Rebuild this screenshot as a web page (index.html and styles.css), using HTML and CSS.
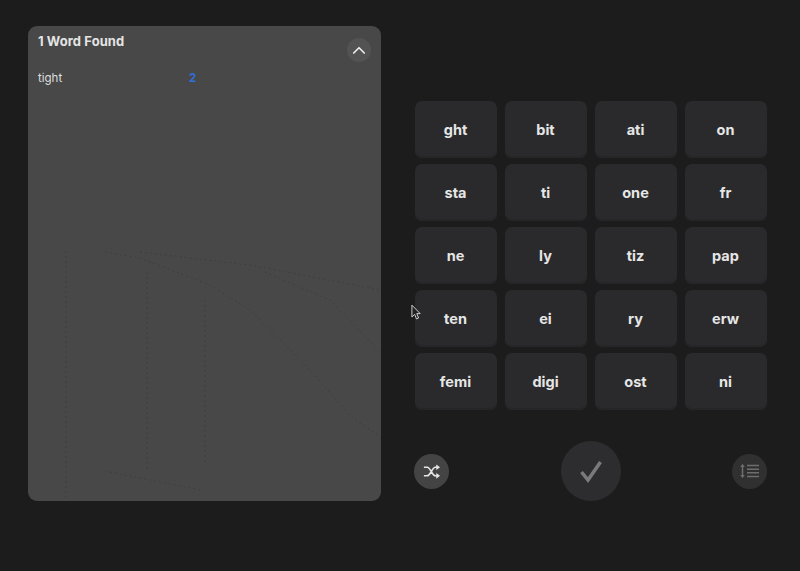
FILE: index.html
```html
<!DOCTYPE html>
<html lang="en">
<head>
  <meta charset="UTF-8" />
  <meta name="viewport" content="width=device-width, initial-scale=1.0" />
  <title>Word Tiles</title>
  <link rel="stylesheet" href="styles.css">
</head>
<body>
  <!-- Found words -->
  <section class="panel">
    <svg class="panel-marks" viewBox="0 0 353 475" aria-hidden="true">
      <path d="M38 225V475M119 246V445M177 274V440M77 226L112 232L182 259L222 284L272 334L327 394L353 411M237 246L302 274L353 327M112 226L222 239L353 264M77 445L172 464"/>
    </svg>
    <div class="panel-head">
      <h2 class="panel-title">1 Word Found</h2>
      <button class="collapse-btn" type="button" aria-label="Collapse">
        <svg viewBox="0 0 24 24"><path d="M5 16l7-7 7 7"/></svg>
      </button>
    </div>
    <ul class="word-list">
      <li class="word-row"><span class="word">tight</span><span class="word-score">2</span></li>
    </ul>
  </section>

  <!-- Board -->
  <main class="board">
    <div class="tiles">
      <button class="tile" type="button">ght</button>
      <button class="tile" type="button">bit</button>
      <button class="tile" type="button">ati</button>
      <button class="tile" type="button">on</button>
      <button class="tile" type="button">sta</button>
      <button class="tile" type="button">ti</button>
      <button class="tile" type="button">one</button>
      <button class="tile" type="button">fr</button>
      <button class="tile" type="button">ne</button>
      <button class="tile" type="button">ly</button>
      <button class="tile" type="button">tiz</button>
      <button class="tile" type="button">pap</button>
      <button class="tile" type="button">ten</button>
      <button class="tile" type="button">ei</button>
      <button class="tile" type="button">ry</button>
      <button class="tile" type="button">erw</button>
      <button class="tile" type="button">femi</button>
      <button class="tile" type="button">digi</button>
      <button class="tile" type="button">ost</button>
      <button class="tile" type="button">ni</button>
    </div>
    <div class="actions">
      <button class="round-btn shuffle" type="button" aria-label="Shuffle">
        <svg viewBox="0 0 20 20"><path d="M2 5.500h3.500c3.500 0 5 9 8.500 9H16M2 14.500h3.500c3.500 0 5-9 8.500-9H16"/><path class="fill" d="M15 2.500l4 3-4 3zM15 11.500l4 3-4 3z"/></svg>
      </button>
      <button class="round-btn submit" type="button" aria-label="Submit">
        <svg viewBox="0 0 24 24"><path d="M2.500 13l6.500 8L21.500 3"/></svg>
      </button>
      <button class="round-btn sort" type="button" aria-label="Sort">
        <svg viewBox="0 0 20 20"><path d="M7 4.500h12M7 8.200h12M7 11.800h12M7 15.500h12M2.500 6v8"/><path class="fill" d="M2.500 2.800l2.200 3.200H.3zM2.500 17.200l2.200-3.200H.3z"/></svg>
      </button>
    </div>
  </main>

  <svg class="cursor" viewBox="0 0 12 18" aria-hidden="true"><path d="M1 1v13l3-3 2 5 2.300-1-2-4.800H10z"/></svg>
</body>
</html>
```

FILE: styles.css
```css
:root {
  --bg: #1c1c1c;
  --panel: #484848;
  --tile: #2a2a2c;
  --tile-edge: #262628;
  --text: #e6e6e6;
  --blue: #2f6fdc;
}
*, *::before, *::after { box-sizing: border-box; }
html, body { margin: 0; padding: 0; height: 100%; overflow: hidden; }
body {
  position: relative;
  display: flex; align-items: flex-start;
  padding: 26px 33px 0 28px; gap: 34px;
  background: var(--bg); color: var(--text);
  font-family: 'Inter', sans-serif;
}
button { border: none; padding: 0; font-family: inherit; color: inherit; }

.panel {
  position: relative;
  flex: 0 0 353px; height: 475px;
  padding: 7px 10px 0 10px;
  background: var(--panel); border-radius: 9px;
}
.panel-marks { position: absolute; inset: 0; width: 100%; height: 100%; }
.panel-marks path { fill: none; stroke: #3f3f3f; stroke-width: 1; stroke-dasharray: 2 3; }
.panel-head { position: relative; display: flex; justify-content: space-between; align-items: flex-start; }
.panel-title { margin: 0; font-size: 13px; line-height: 16px; font-weight: 700; letter-spacing: .08px; color: #e4e4e4; }
.collapse-btn {
  width: 24px; height: 24px; margin-top: 5px;
  display: flex; align-items: center; justify-content: center;
  background: #535353; border-radius: 50%;
}
.collapse-btn svg { width: 18px; height: 18px; }
.collapse-btn path { fill: none; stroke: #f0f0f0; stroke-width: 2.200; stroke-linecap: round; stroke-linejoin: round; }

.word-list { position: relative; list-style: none; margin: 8px 0 0; padding: 0; }
.word-row { display: flex; font-size: 11.500px; line-height: 16px; color: #dedede; }
.word { width: 151px; }
.word-score { color: var(--blue); font-weight: 700; }

.board { flex: 0 0 352px; padding-top: 75px; }
.tiles { display: grid; grid-template-columns: repeat(4, 82px); justify-content: space-between; grid-auto-rows: 57px; row-gap: 6px; }
.tile {
  display: flex; align-items: center; justify-content: center;
  padding-right: 1px; padding-bottom: 1px;
  background: var(--tile); border-radius: 7px;
  box-shadow: inset 0 -2px 0 var(--tile-edge);
  font-size: 14.500px; font-weight: 700; color: var(--text);
}
.actions { display: flex; justify-content: space-between; align-items: center; margin: 31px 0 0 -1px; }
.round-btn { display: flex; align-items: center; justify-content: center; border-radius: 50%; }
.round-btn path { fill: none; stroke-linecap: butt; }
.round-btn path.fill { stroke: none; }

.shuffle { width: 35px; height: 35px; background: #444; }
.shuffle svg { width: 19px; height: 19px; }
.shuffle path { stroke: #e6e6e6; stroke-width: 1.700; }
.shuffle path.fill { fill: #e6e6e6; }

.submit { width: 60px; height: 60px; background: #2d2d2f; }
.submit svg { width: 24px; height: 24px; }
.submit path { stroke: #7a7a7a; stroke-width: 3.500; }

.sort { width: 35px; height: 35px; background: #303031; }
.sort svg { width: 20px; height: 20px; }
.sort path { stroke: #6e6e6e; stroke-width: 1.500; }
.sort path.fill { fill: #6e6e6e; }

.cursor { position: absolute; left: 411px; top: 304px; width: 11px; height: 17px; }
.cursor path { fill: #222; stroke: #ddd; stroke-width: 1; }
```
